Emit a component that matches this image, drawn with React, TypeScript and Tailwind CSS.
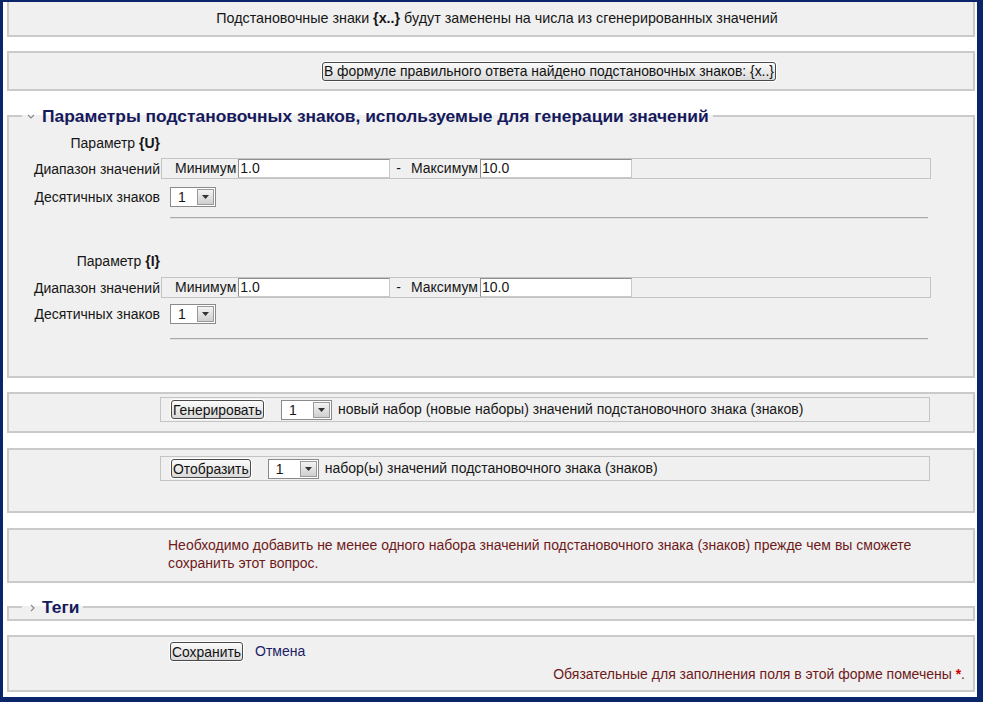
import React from 'react'

const font = "font-['Liberation_Sans',Arial,sans-serif]"

function Btn({ children }: { children: React.ReactNode }) {
  return (
    <button className="h-[19px] px-[1px] leading-[16px] text-[13.9px] text-[#111] border border-[#4a4a4a] rounded-[3px] bg-linear-to-b from-[#fbfbfb] to-[#dadada] shadow-[0_0_0_1px_#fff]">
      {children}
    </button>
  )
}

function Select({ className }: { className: string }) {
  return (
    <div className={`h-[20px] flex items-center justify-between bg-white border border-[#8a8a8a] pl-[7px] pr-[1px] ${className}`}>
      <span className="text-[14px] leading-none">1</span>
      <span className="w-[17px] h-[16px] flex items-center justify-center border border-[#9a9a9a] bg-linear-to-b from-[#f4f4f4] to-[#cfcfcf]">
        <svg width="7" height="4" viewBox="0 0 7 4">
          <path d="M0 0 L7 0 L3.5 4 Z" fill="#333" />
        </svg>
      </span>
    </div>
  )
}

function Input({ value }: { value: string }) {
  return (
    <div className="w-[152px] h-[19px] bg-white border border-[#8f8f8f] border-b-[#c8c8c8] border-r-[#c8c8c8] pl-[1px] text-[14px] leading-[17px]">
      {value}
    </div>
  )
}

function Row({ label, children, className = '' }: { label: React.ReactNode; children?: React.ReactNode; className?: string }) {
  return (
    <div className={`flex items-center ${className}`}>
      <div className="w-[152px] pr-[1px] text-right text-[14px] leading-[18px] whitespace-nowrap">{label}</div>
      {children}
    </div>
  )
}

function ParamBlock({ name, first }: { name: string; first: boolean }) {
  return (
    <div className="flex flex-col">
      <Row
        label={<>Параметр <b>{`{${name}}`}</b></>}
        className={first ? 'h-[18px] mt-[7px]' : 'h-[18px] mt-[33px]'}
      />
      <Row label="Диапазон значений" className={first ? 'mt-[6px]' : 'mt-[7px]'}>
        <div className="w-[770px] h-[21px] border border-[#c4c4c4] flex items-center pl-[13px] text-[14px]">
          <span className="mr-[2px]">Минимум</span>
          <Input value="1.0" />
          <span className="ml-[6px] mr-[10px]">-</span>
          <span className="mr-[2px]">Максимум</span>
          <Input value="10.0" />
        </div>
      </Row>
      <Row label="Десятичных знаков" className={first ? 'mt-[8px]' : 'mt-[6px]'}>
        <Select className="ml-[9px] w-[46px]" />
      </Row>
      <div className={`ml-[161px] w-[758px] h-[2px] bg-[#a9a9a9] border-b border-[#e0e0e0] ${first ? 'mt-[10px]' : 'mt-[14px]'}`} />
    </div>
  )
}

export default function App() {
  return (
    <div className={`w-[983px] h-[702px] bg-[#0a2569] pt-[2px] pl-[3px] pr-[6px] pb-[5px] ${font} text-[#161616]`}>
      <div className="h-full bg-white pl-[4px] pr-[2px] flex flex-col overflow-hidden">
        <div className="h-[35px] bg-[#f0f0f0] border-2 border-t-0 border-[#cacaca] flex items-center justify-center pl-[12px] text-[14.3px]">
          Подстановочные знаки&nbsp;<b>{'{x..}'}</b>&nbsp;будут заменены на числа из сгенерированных значений
        </div>

        <div className="mt-[14px] h-[40px] bg-[#f0f0f0] border-2 border-[#cacaca] flex items-center pl-[313px]">
          <Btn>В формуле правильного ответа найдено подстановочных знаков: {'{x..}'}</Btn>
        </div>

        <fieldset className="mt-[14px] border-2 border-[#cacaca] bg-[#f0f0f0] p-0 pb-[36px] min-w-0">
          <legend className="ml-[13px] px-[4px] h-[22px] flex items-center text-[17.4px] font-bold text-[#161a5c]">
            <svg width="8" height="6" viewBox="0 0 8 6" className="ml-[1px] mr-[7px] mt-[2px]">
              <path d="M1 1 L4 4 L7 1" stroke="#8a8a8a" strokeWidth="1.2" fill="none" />
            </svg>
            Параметры подстановочных знаков, используемые для генерации значений
          </legend>
          <ParamBlock name="U" first />
          <ParamBlock name="I" first={false} />
        </fieldset>

        <div className="mt-[14px] h-[41px] bg-[#f0f0f0] border-2 border-[#cacaca] pt-[3px] pl-[151px]">
          <div className="w-[770px] h-[25px] border border-[#c4c4c4] flex items-center pl-[10px] text-[14px]">
            <Btn>Генерировать</Btn>
            <Select className="ml-[17px] w-[51px]" />
            <span className="ml-[6px]">новый набор (новые наборы) значений подстановочного знака (знаков)</span>
          </div>
        </div>

        <div className="mt-[15px] h-[65px] bg-[#f0f0f0] border-2 border-[#cacaca] pt-[6px] pl-[151px]">
          <div className="w-[770px] h-[25px] border border-[#c4c4c4] flex items-center pl-[10px] text-[14px]">
            <Btn>Отобразить</Btn>
            <Select className="ml-[17px] w-[51px]" />
            <span className="ml-[6px]">набор(ы) значений подстановочного знака (знаков)</span>
          </div>
        </div>

        <div className="mt-[15px] h-[55px] bg-[#f0f0f0] border-2 border-[#cacaca] pt-[6px] pl-[159px] text-[14px] leading-[18px] text-[#6e1a1a]">
          Необходимо добавить не менее одного набора значений подстановочного знака (знаков) прежде чем вы сможете
          <br />
          сохранить этот вопрос.
        </div>

        <fieldset className="mt-[13px] border-2 border-[#cacaca] bg-[#f0f0f0] p-0 pb-[1px] min-w-0">
          <legend className="ml-[13px] px-[4px] h-[22px] flex items-center text-[17.4px] font-bold text-[#161a5c]">
            <svg width="5" height="8" viewBox="0 0 5 8" className="ml-[4px] mr-[7px] mt-[1px]">
              <path d="M1 1 L4 4 L1 7" stroke="#8a8a8a" strokeWidth="1.2" fill="none" />
            </svg>
            Теги
          </legend>
        </fieldset>

        <div className="mt-[14px] h-[57px] bg-[#f0f0f0] border-2 border-[#cacaca] pt-[4px] pl-[161px] pr-[8px] flex flex-col">
          <div className="flex items-center">
            <Btn>Сохранить</Btn>
            <span className="ml-[12px] text-[14px] text-[#1d1d66]">Отмена</span>
          </div>
          <div className="mt-[2px] text-right text-[14px] text-[#6e1a1a]">
            Обязательные для заполнения поля в этой форме помечены <span className="text-[#d00000] font-bold">*</span>.
          </div>
        </div>
      </div>
    </div>
  )
}
